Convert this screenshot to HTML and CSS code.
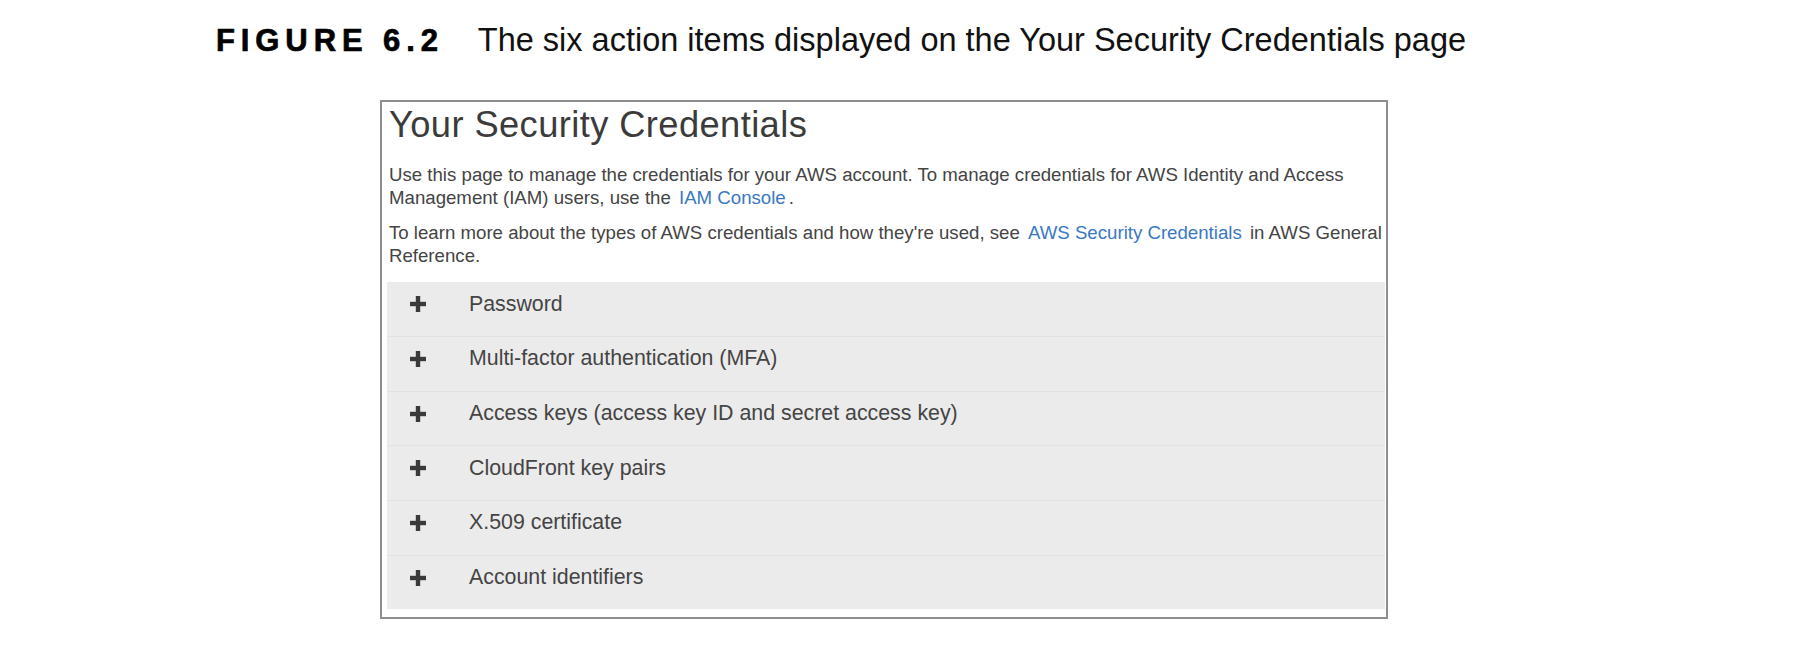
FILE: index.html
```html
<!DOCTYPE html>
<html lang="en">
<head>
<meta charset="utf-8">
<title>Your Security Credentials</title>
<link rel="stylesheet" href="styles.css">
</head>
<body>
<div class="page">
  <div class="caption">
    <span class="fig-label">FIGURE 6.2</span>
    <span class="fig-text">The six action items displayed on the Your Security Credentials page</span>
  </div>

  <div class="panel">
    <h1 class="panel-title">Your Security Credentials</h1>
    <p class="intro">Use this page to manage the credentials for your AWS account. To manage credentials for AWS Identity and Access Management (IAM) users, use the <a class="link" href="#">IAM Console</a>.</p>
    <p class="intro intro-second">To learn more about the types of AWS credentials and how they're used, see <a class="link" href="#">AWS Security Credentials</a> in AWS General Reference.</p>

    <div class="accordion">
      <div class="acc-row">
        <svg class="plus" viewBox="0 0 16 16" aria-hidden="true"><rect x="0" y="5.8" width="16" height="4.4"/><rect x="5.8" y="0" width="4.4" height="16"/></svg>
        <span class="acc-label">Password</span>
      </div>
      <div class="acc-row">
        <svg class="plus" viewBox="0 0 16 16" aria-hidden="true"><rect x="0" y="5.8" width="16" height="4.4"/><rect x="5.8" y="0" width="4.4" height="16"/></svg>
        <span class="acc-label">Multi-factor authentication (MFA)</span>
      </div>
      <div class="acc-row">
        <svg class="plus" viewBox="0 0 16 16" aria-hidden="true"><rect x="0" y="5.8" width="16" height="4.4"/><rect x="5.8" y="0" width="4.4" height="16"/></svg>
        <span class="acc-label">Access keys (access key ID and secret access key)</span>
      </div>
      <div class="acc-row">
        <svg class="plus" viewBox="0 0 16 16" aria-hidden="true"><rect x="0" y="5.8" width="16" height="4.4"/><rect x="5.8" y="0" width="4.4" height="16"/></svg>
        <span class="acc-label">CloudFront key pairs</span>
      </div>
      <div class="acc-row">
        <svg class="plus" viewBox="0 0 16 16" aria-hidden="true"><rect x="0" y="5.8" width="16" height="4.4"/><rect x="5.8" y="0" width="4.4" height="16"/></svg>
        <span class="acc-label">X.509 certificate</span>
      </div>
      <div class="acc-row">
        <svg class="plus" viewBox="0 0 16 16" aria-hidden="true"><rect x="0" y="5.8" width="16" height="4.4"/><rect x="5.8" y="0" width="4.4" height="16"/></svg>
        <span class="acc-label">Account identifiers</span>
      </div>
    </div>
  </div>
</div>
</body>
</html>
```

FILE: styles.css
```css
html, body {
  margin: 0;
  padding: 0;
  background: #ffffff;
}

body {
  font-family: "Liberation Sans", Arial, sans-serif;
  color: #444444;
}

.page {
  padding-top: 22px;
}

.caption {
  display: flex;
  align-items: baseline;
  padding-left: 216px;
  gap: 34px;
  height: 44px;
}

.fig-label {
  font-family: "Liberation Sans", Arial, sans-serif;
  font-weight: 700;
  font-size: 31px;
  letter-spacing: 5.9px;
  color: #000000;
  -webkit-text-stroke: 0.7px #000000;
}

.fig-text {
  font-family: "Liberation Sans", Arial, sans-serif;
  font-size: 32.5px;
  color: #111111;
}

.panel {
  margin-top: 34px;
  margin-left: 380px;
  width: 1008px;
  box-sizing: border-box;
  border: 2px solid #8e8e8e;
  padding: 0 1px 8px 5px;
}

.panel-title {
  margin: 0;
  padding: 3px 0 0 2px;
  font-weight: 400;
  font-size: 36.3px;
  line-height: 40px;
  color: #3b3b3b;
  letter-spacing: 0.4px;
}

.intro {
  margin: 19px -6px 0 0;
  padding-left: 2px;
  font-size: 18.65px;
  line-height: 22.5px;
  color: #444444;
}

.intro-second {
  margin-top: 12px;
  line-height: 23px;
}

.link {
  color: #3a78c2;
  text-decoration: none;
  margin: 0 3px;
}

.accordion {
  margin-top: 15px;
  background: #ebebeb;
  display: flex;
  flex-direction: column;
}

.acc-row {
  display: flex;
  align-items: center;
  height: 54px;
  box-sizing: border-box;
  padding: 0 0 10px 23px;
}

.acc-row + .acc-row {
  height: 54.7px;
  border-top: 1px solid #e2e2e2;
}

.plus {
  width: 16px;
  height: 16px;
  fill: #3a3a3a;
  flex: none;
}

.acc-label {
  margin-left: 43px;
  font-size: 21.35px;
  color: #444444;
}
```
